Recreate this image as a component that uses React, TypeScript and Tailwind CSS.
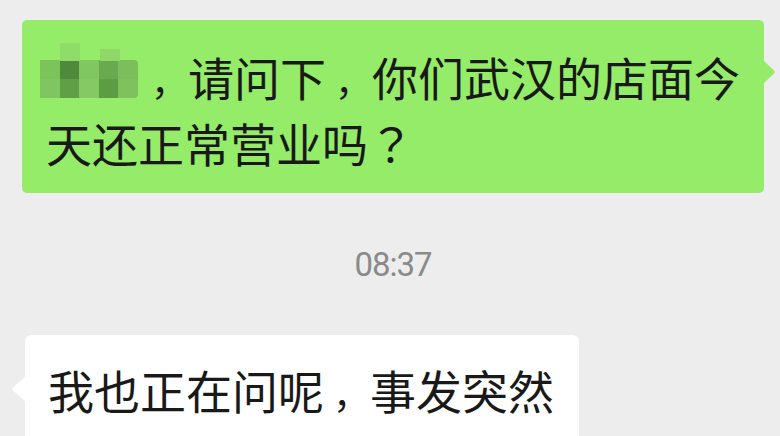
import React from "react";

const cjk = { fontFamily: '"Noto Sans CJK SC", "Noto Sans", sans-serif' };

// pixelated name (the reference hides it with a mosaic)
const mosaic = [
  ["#7cc35c", "#4f8a3c", "#80c661", "#68aa4d", "#7bbf5c"],
  ["#7fc560", "#609f45", "#84c964", "#5e9c43", "#7dc25d"],
];

function Mosaic() {
  return (
    <span className="relative inline-block align-top mt-[17px] ml-[-6px] mr-[4px] w-[98px] h-[38px] blur-[0.6px]">
      <span className="absolute left-[20px] top-[-17px] w-[20px] h-[18px] bg-[#8fdc68]" />
      <span className="absolute left-[60px] top-[-11px] w-[20px] h-[12px] bg-[#8ed867]" />
      <span className="grid grid-cols-5 w-full h-full rounded-r-[4px] overflow-hidden">
        {mosaic.flat().map((c, i) => (
          <span key={i} style={{ background: c }} />
        ))}
      </span>
    </span>
  );
}

// full-width comma sits a bit further right in the screenshot's font
function Comma() {
  return <span className="inline-block w-[46px] pl-[9px] text-[37px] leading-none">，</span>;
}

export default function App() {
  return (
    <div className="w-[780px] h-[436px] overflow-hidden bg-[#ededed] pt-[20px] flex flex-col" style={cjk}>
      {/* sent message */}
      <div className="pl-[22px]">
        <div className="relative w-[742px] rounded-[5px] bg-[#95ec69] pl-[24px] pr-[20px] pt-[23px] pb-[18px] text-[46px] leading-[66px] text-[#191919]">
          <svg className="absolute right-[-12px] top-[40px]" width="13" height="24" viewBox="0 0 13 24">
            <path d="M0 0 L11 10.5 Q12.5 12 11 13.5 L0 24 Z" fill="#95ec69" />
          </svg>
          <div className="h-[66px] whitespace-nowrap">
            <Mosaic />
            <Comma />请问下<Comma />你们武汉的店面今
          </div>
          <div className="h-[66px] whitespace-nowrap">
            天还正常营业吗<span style={{ fontFamily: '"Noto Sans CJK TC", sans-serif' }}>？</span>
          </div>
        </div>
      </div>

      {/* time */}
      <div
        className="mt-[52px] h-[40px] text-center text-[33px] leading-[40px] tracking-[-1px] text-[#8a8a8a] pl-[6px]"
        style={{ fontFamily: "Roboto, sans-serif" }}
      >
        08:37
      </div>

      {/* received message */}
      <div className="mt-[50px] pl-[25px]">
        <div className="relative w-[554px] h-[120px] rounded-[6px] bg-white pl-[23px] pt-[21px] text-[46px] leading-[66px] text-[#191919]">
          <svg className="absolute left-[-14px] top-[41px]" width="15" height="26" viewBox="0 0 15 26">
            <path d="M15 0 L2 11.5 Q0.5 13 2 14.5 L15 26 Z" fill="#ffffff" />
          </svg>
          <div className="h-[66px] whitespace-nowrap">
            我也正在问呢<Comma />事发突然
          </div>
        </div>
      </div>
    </div>
  );
}
